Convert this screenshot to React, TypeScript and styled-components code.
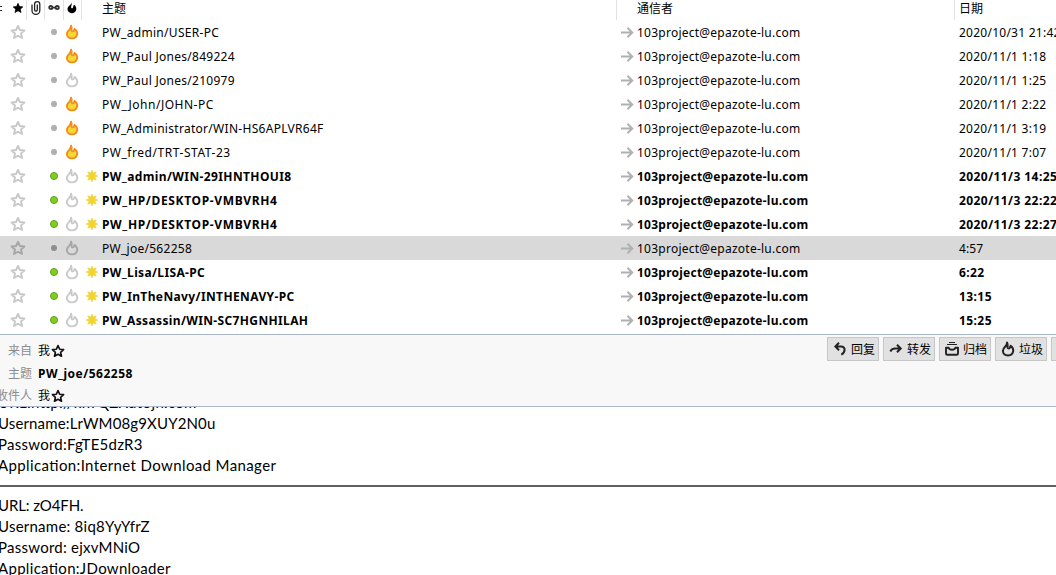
import React from 'react';
import styled, { createGlobalStyle } from 'styled-components';

const Global = createGlobalStyle`
  * { box-sizing: border-box; }
  html, body { margin: 0; padding: 0; overflow: hidden; background: #fff; }
`;

const Window = styled.div`
  width: 1056px;
  height: 575px;
  overflow: hidden;
  display: flex;
  flex-direction: column;
  background: #fff;
  color: #000;
  font-family: 'Noto Sans', 'Noto Sans CJK SC', sans-serif;
  font-size: 12px;
  white-space: nowrap;
`;

const columns = '27px 18px 19px 18px 535px 338px 101px';

const HeaderRow = styled.div`
  display: grid;
  grid-template-columns: ${columns};
  height: 20px;
  flex: none;
`;

const HeaderCell = styled.div<{ $pad?: number; $line?: boolean }>`
  display: flex;
  align-items: center;
  height: 20px;
  padding: 0 0 4px ${(p) => p.$pad ?? 0}px;
  border-right: ${(p) => (p.$line === false ? 'none' : '1px solid #e2e2e2')};
  overflow: hidden;
`;

const SortMark = styled.span`
  width: 2px;
  height: 5px;
  margin-right: 10px;
  border-top: 1px solid #333;
  border-bottom: 1px solid #333;
`;

const List = styled.div`
  height: 314px;
  flex: none;
`;

const Row = styled.div<{ $unread: boolean; $selected: boolean }>`
  display: grid;
  grid-template-columns: 45px 19px 18px 20px 518px 339px 97px;
  align-items: center;
  height: 24px;
  padding-top: 2px;
  font-weight: ${(p) => (p.$unread ? 700 : 400)};
  background: ${(p) => (p.$selected ? '#d9d9d9' : 'transparent')};
  --muted: ${(p) => (p.$selected ? '#a6a6a6' : '#c9c9c9')};
  --dot: ${(p) => (p.$selected ? '#8f8f8f' : '#b0b0b0')};
`;

const IconCell = styled.div<{ $pad: number }>`
  display: flex;
  padding: 0 0 2px ${(p) => p.$pad}px;
`;

const Label = styled.span<{ $track: number }>`
  letter-spacing: ${(p) => p.$track}px;
  line-height: 22px;
`;

const Correspondent = styled.div`
  display: flex;
  align-items: center;
  gap: 3px;
`;

const Dot = styled.span<{ $unread: boolean }>`
  width: ${(p) => (p.$unread ? 8 : 6)}px;
  height: ${(p) => (p.$unread ? 8 : 6)}px;
  border-radius: 50%;
  background: ${(p) => (p.$unread ? '#83cc1e' : 'var(--dot)')};
  border: ${(p) => (p.$unread ? '1.5px solid #62a31a' : 'none')};
`;

const Summary = styled.section`
  display: flex;
  justify-content: space-between;
  height: 73px;
  flex: none;
  border-top: 1px solid #a9b7c9;
  border-bottom: 1px solid #a9b7c9;
  background: #f8f8f8;
`;

const Fields = styled.div`
  display: flex;
  flex-direction: column;
  padding-top: 5px;
  overflow: hidden;
`;

const Field = styled.div`
  display: flex;
  align-items: center;
  flex: none;
  height: 22.6px;
  line-height: 20px;
`;

const FieldName = styled.span`
  width: 38px;
  flex: none;
  display: flex;
  justify-content: flex-end;
  padding-right: 6px;
  color: #8c8c8c;
`;

const Contact = styled.span`
  display: flex;
  align-items: center;
  gap: 1px;
`;

const Subject = styled.strong`
  letter-spacing: 0.5px;
`;

const Actions = styled.div`
  display: flex;
  gap: 4px;
  width: 229px;
  padding-top: 2px;
  overflow: hidden;
`;

const Action = styled.button`
  display: flex;
  align-items: center;
  gap: 3px;
  flex: none;
  width: 52px;
  height: 24px;
  padding: 0 0 0 4px;
  border: 1px solid #c6c6c6;
  background: #e1e1e1;
  color: #000;
  font: inherit;
`;

const Body = styled.article`
  flex: 1;
  overflow: hidden;
  font-family: Lato, sans-serif;
  font-size: 15px;
  line-height: 21px;
  font-feature-settings: 'liga' 1;
`;

const Lines = styled.div`
  display: flex;
  flex-direction: column;
  margin: -15px 0 0 -2px;
`;

const MoreLines = styled(Lines)`
  margin: 0 0 0 -2px;
`;

const Line = styled.span<{ $track?: number }>`
  height: 21px;
  letter-spacing: ${(p) => p.$track ?? 0}px;
`;

const Rule = styled.div`
  height: 2px;
  margin: 9px 0 8px;
  background: #606060;
`;

const starPath = 'M8 1.8 L9.9 6 L14.4 6.5 L11 9.5 L12 14 L8 11.7 L4 14 L5 9.5 L1.6 6.5 L6.1 6 Z';
const flamePath =
  'M6 1.4 C7.6 4.4 5.3 5.9 5.6 8.2 C5.9 10.2 8.3 9.8 8.4 7.6 C8.5 6.4 9 5.5 10 4.9 C11.6 6.4 12.4 8 12.2 10.2 C11.9 12.9 9.8 14.8 7 14.8 C4 14.8 1.9 12.8 1.9 10 C1.9 8.2 2.9 7 4.1 5.8 C5.4 4.5 6.3 3.2 6 1.4 Z';
const openFlamePath =
  'M6 1.6 C7.4 4 6.2 5 6.6 6.6 C7 7.8 8.8 7.6 9 6.4 L9.6 4.9 C11.6 6.4 12.5 8 12.2 10.2 C11.9 12.8 9.8 14.4 7 14.4 C4 14.4 1.9 12.6 1.9 10 C1.9 8.2 2.9 7 4.1 5.8 C5.4 4.5 6.3 3.2 6 1.6 Z';

const Star = ({ color, size = 16, fill = 'none', weight = 1.9 }: { color: string; size?: number; fill?: string; weight?: number }) => (
  <svg width={size} height={size} viewBox="0 0 16 16">
    <path d={starPath} fill={fill} stroke={color} strokeWidth={weight} strokeLinejoin="round" />
  </svg>
);

const Flame = ({ junk }: { junk: boolean }) => (
  <svg width="14" height="16" viewBox="0 0 14 16">
    <path
      d={openFlamePath}
      fill={junk ? '#f2d935' : 'none'}
      stroke={junk ? '#f68b1f' : 'var(--muted)'}
      strokeWidth="1.9"
      strokeLinejoin="round"
    />
  </svg>
);

const DarkFlame = () => (
  <svg width="16" height="16" viewBox="-1 0 16 16">
    <path d={openFlamePath} fill="none" stroke="#222" strokeWidth="2" strokeLinejoin="round" />
  </svg>
);

const Arrow = () => (
  <svg width="14" height="14" viewBox="0 0 14 14" fill="none" stroke="#b0b0b0" strokeWidth="2">
    <path d="M1 6.5 H12 M7.5 1.8 L12.2 6.5 L7.5 11.2" />
  </svg>
);

const Burst = () => (
  <svg width="12" height="12" viewBox="0 0 12 12">
    <path
      d="M6 0 L7.1 3.1 L10.2 1.8 L8.9 4.9 L12 6 L8.9 7.1 L10.2 10.2 L7.1 8.9 L6 12 L4.9 8.9 L1.8 10.2 L3.1 7.1 L0 6 L3.1 4.9 L1.8 1.8 L4.9 3.1 Z"
      fill="#f0d431"
      stroke="#f0d431"
      strokeWidth="0.6"
    />
  </svg>
);

const Clip = () => (
  <svg width="10" height="15" viewBox="0 0 10 15" fill="none" stroke="#222" strokeWidth="1.3">
    <path d="M1 3.5 V9.5 A3.9 3.9 0 0 0 8.8 9.5 V3.3 A2.6 2.6 0 0 0 3.6 3.3 V9 A1.4 1.4 0 0 0 6.3 9 V3.6" />
  </svg>
);

const Thread = () => (
  <svg width="12" height="6" viewBox="0 0 12 6" fill="none" stroke="#333" strokeWidth="1.8">
    <circle cx="2.8" cy="2.6" r="1.6" />
    <circle cx="9.2" cy="2.6" r="1.6" />
    <path d="M4.5 2.6 H7.5" />
  </svg>
);

const HeaderFlame = () => (
  <svg width="10" height="12" viewBox="0 0 10 12">
    <path
      d="M4.2 0.4 C5.4 2.6 3.9 3.8 4.1 5.4 C4.4 6.9 6 6.5 6.1 5 C6.1 4.2 6.5 3.4 7.2 2.8 C8.8 4.2 9.6 5.8 9.2 7.8 C8.8 10 7 11.2 4.9 11.2 C2.4 11.2 .5 9.6 .5 7.3 C.5 5.9 1 5 2.2 3.8 C3.6 2.6 4.3 1.8 4.2 .4 Z"
      fill="#000"
    />
  </svg>
);

const Reply = () => (
  <svg width="16" height="16" viewBox="0 0 16 16" fill="none" stroke="#222" strokeWidth="2">
    <path d="M7 1.8 L3.4 5.5 L7 9.2 M3.6 5.5 H9 C14 5.5 13.5 11.5 9.3 13.6" />
  </svg>
);

const Forward = () => (
  <svg width="16" height="16" viewBox="0 0 16 16" fill="none" stroke="#222" strokeWidth="2">
    <path d="M9 3.8 L12.7 7.5 L9 11.2 M12.5 7.5 H7 C4.5 7.5 3.3 8.3 2.4 10.5" />
  </svg>
);

const Archive = () => (
  <svg width="16" height="16" viewBox="0 0 16 16" fill="none" stroke="#222">
    <path d="M5 1.5 H11 M3 3.5 H13" strokeWidth="1" />
    <path
      d="M2 6.8 H4.6 C5.4 9.4 10.6 9.4 11.4 6.8 H14 V12.4 Q14 13.8 12.6 13.8 H3.4 Q2 13.8 2 12.4 Z"
      strokeWidth="1.9"
      strokeLinejoin="round"
    />
  </svg>
);

type Mail = {
  subject: string;
  track: number;
  date: string;
  dateTrack: number;
  junk?: boolean;
  unread?: boolean;
  selected?: boolean;
};

const mails: Mail[] = [
  { subject: 'PW_admin/USER-PC', track: 0.31, date: '2020/10/31 21:42', dateTrack: 0.25, junk: true },
  { subject: 'PW_Paul Jones/849224', track: 0.27, date: '2020/11/1 1:18', dateTrack: 0.25, junk: true },
  { subject: 'PW_Paul Jones/210979', track: 0.27, date: '2020/11/1 1:25', dateTrack: 0.25 },
  { subject: 'PW_John/JOHN-PC', track: 0.52, date: '2020/11/1 2:22', dateTrack: 0.25, junk: true },
  { subject: 'PW_Administrator/WIN-HS6APLVR64F', track: 0.29, date: '2020/11/1 3:19', dateTrack: 0.25, junk: true },
  { subject: 'PW_fred/TRT-STAT-23', track: 0.54, date: '2020/11/1 7:07', dateTrack: 0.25, junk: true },
  { subject: 'PW_admin/WIN-29IHNTHOUI8', track: 0.39, date: '2020/11/3 14:25', dateTrack: 0.42, unread: true },
  { subject: 'PW_HP/DESKTOP-VMBVRH4', track: 0.65, date: '2020/11/3 22:22', dateTrack: 0.42, unread: true },
  { subject: 'PW_HP/DESKTOP-VMBVRH4', track: 0.65, date: '2020/11/3 22:27', dateTrack: 0.42, unread: true },
  { subject: 'PW_joe/562258', track: 0.27, date: '4:57', dateTrack: 0.1, selected: true },
  { subject: 'PW_Lisa/LISA-PC', track: 0.36, date: '6:22', dateTrack: 0.42, unread: true },
  { subject: 'PW_InTheNavy/INTHENAVY-PC', track: 0.38, date: '13:15', dateTrack: 0.42, unread: true },
  { subject: 'PW_Assassin/WIN-SC7HGNHILAH', track: 0.36, date: '15:25', dateTrack: 0.42, unread: true },
];

const MailRow = ({ mail }: { mail: Mail }) => {
  const unread = !!mail.unread;
  return (
    <Row $unread={unread} $selected={!!mail.selected}>
      <IconCell $pad={10}><Star color="var(--muted)" /></IconCell>
      <IconCell $pad={unread ? 5 : 6}><Dot $unread={unread} /></IconCell>
      <IconCell $pad={0.5}><Flame junk={!!mail.junk} /></IconCell>
      <IconCell $pad={4}>{unread && <Burst />}</IconCell>
      <Label $track={mail.track}>{mail.subject}</Label>
      <Correspondent>
        <Arrow />
        <Label $track={0.24}>103project@epazote-lu.com</Label>
      </Correspondent>
      <Label $track={mail.dateTrack}>{mail.date}</Label>
    </Row>
  );
};

export default function App() {
  return (
    <Window>
      <Global />
      <HeaderRow>
        <HeaderCell><SortMark /><Star color="#000" fill="#000" size={12} weight={1} /></HeaderCell>
        <HeaderCell $pad={4}><Clip /></HeaderCell>
        <HeaderCell $pad={3}><Thread /></HeaderCell>
        <HeaderCell $pad={3}><HeaderFlame /></HeaderCell>
        <HeaderCell $pad={20}>主题</HeaderCell>
        <HeaderCell $pad={20}>通信者</HeaderCell>
        <HeaderCell $pad={4} $line={false}>日期</HeaderCell>
      </HeaderRow>
      <List>
        {mails.map((mail, i) => <MailRow key={i} mail={mail} />)}
      </List>
      <Summary>
        <Fields>
          <Field><FieldName>来自</FieldName><Contact>我<Star color="#111" size={14} /></Contact></Field>
          <Field><FieldName>主题</FieldName><Subject>PW_joe/562258</Subject></Field>
          <Field><FieldName>收件人</FieldName><Contact>我<Star color="#111" size={14} /></Contact></Field>
        </Fields>
        <Actions>
          <Action><Reply />回复</Action>
          <Action><Forward />转发</Action>
          <Action><Archive />归档</Action>
          <Action><DarkFlame />垃圾</Action>
          <Action />
        </Actions>
      </Summary>
      <Body>
        <Lines>
          <Line $track={0.3}>URL:http://knTQZXdt3jh.com</Line>
          <Line $track={0.14}>Username:LrWM08g9XUY2N0u</Line>
          <Line $track={0.25}>Password:FgTE5dzR3</Line>
          <Line $track={0.38}>Application:Internet Download Manager</Line>
        </Lines>
        <Rule />
        <MoreLines>
          <Line $track={-0.1}>URL: zO4FH.</Line>
          <Line $track={0.24}>Username: 8iq8YyYfrZ</Line>
          <Line $track={0.25}>Password: ejxvMNiO</Line>
          <Line $track={0.31}>Application:JDownloader</Line>
        </MoreLines>
      </Body>
    </Window>
  );
}
